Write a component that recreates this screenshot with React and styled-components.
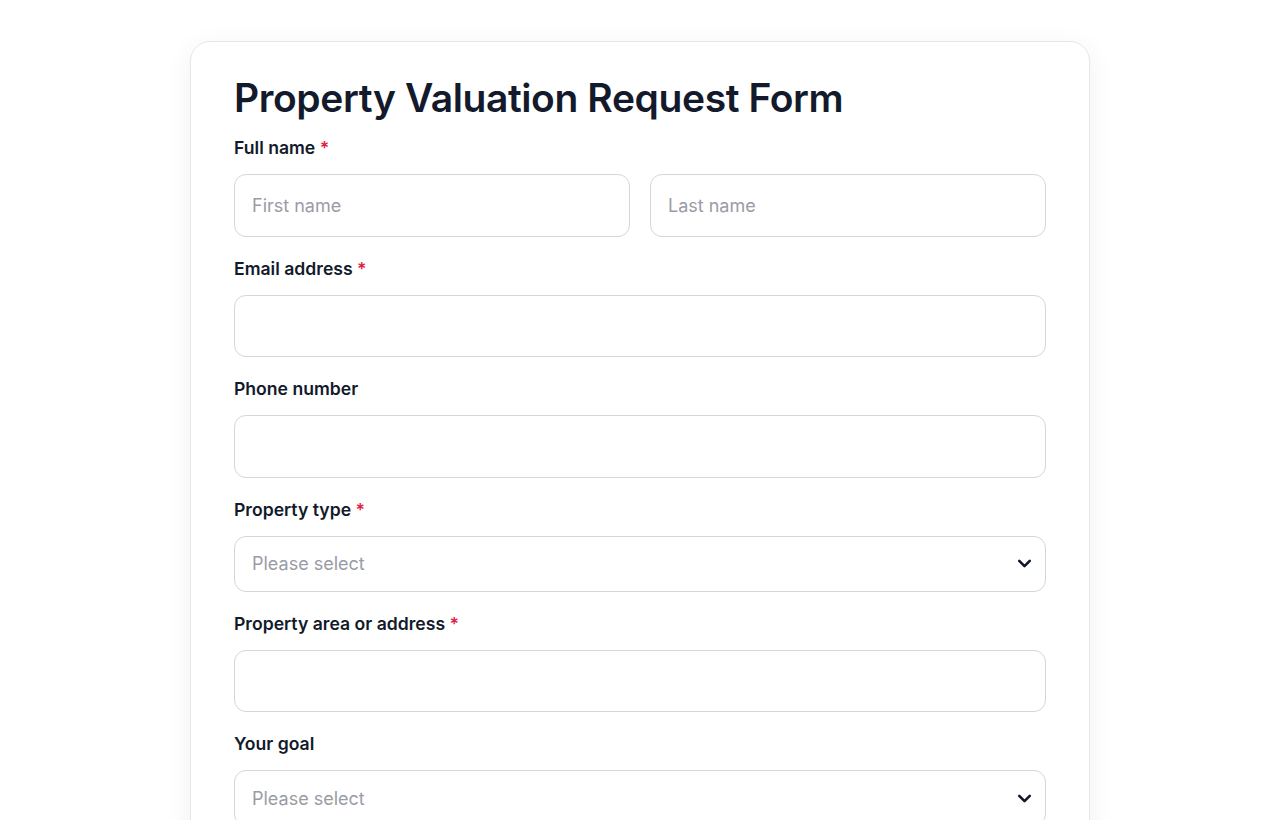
import React from 'react';
import styled, { createGlobalStyle } from 'styled-components';
import { ChevronDown } from 'lucide-react';

const GlobalStyle = createGlobalStyle`
  * { box-sizing: border-box; }
  body {
    margin: 0;
    background: #ffffff;
    font-family: Inter, "Noto Sans", "Liberation Sans", sans-serif;
    color: #111827;
  }
`;

const fields = [
  { label: 'Email address', required: true, type: 'input' },
  { label: 'Phone number', required: false, type: 'input' },
  { label: 'Property type', required: true, type: 'select' },
  { label: 'Property area or address', required: true, type: 'input' },
  { label: 'Your goal', required: false, type: 'select' },
  { label: 'Additional details', required: false, type: 'input' },
];

const App = () => {
  return (
    <React.Fragment>
      <GlobalStyle />
      <Page>
        <Card>
          <Title>Property Valuation Request Form</Title>
          <Fields>
            <Field>
              <Label>
                Full name <Star>*</Star>
              </Label>
              <Row>
                <Input placeholder="First name" />
                <Input placeholder="Last name" />
              </Row>
            </Field>
            {fields.map((f) => (
              <Field key={f.label}>
                <Label>
                  {f.label} {f.required && <Star>*</Star>}
                </Label>
                {f.type === 'select' ? (
                  <SelectBox>
                    <Placeholder>Please select</Placeholder>
                    <ChevronDown size={21} strokeWidth={3} color="#111827" />
                  </SelectBox>
                ) : (
                  <Input />
                )}
              </Field>
            ))}
          </Fields>
        </Card>
      </Page>
    </React.Fragment>
  );
};

const Page = styled.div`
  display: flex;
  justify-content: center;
  padding: 41px 0 60px;
`;

const Card = styled.div`
  width: 900px;
  background: #ffffff;
  border: 1px solid #e6e7eb;
  border-radius: 20px;
  box-shadow: 0 6px 28px rgba(17, 24, 39, 0.06);
  padding: 32px 43px 48px;
`;

const Title = styled.h1`
  margin: 0 0 14px;
  font-size: 39px;
  line-height: 48px;
  font-weight: 600;
  letter-spacing: -0.4px;
  color: #131a2b;
`;

const Fields = styled.div`
  display: flex;
  flex-direction: column;
  gap: 20px;
`;

const Field = styled.div`
  display: flex;
  flex-direction: column;
  gap: 14px;
`;

const Label = styled.label`
  font-size: 17.6px;
  line-height: 24px;
  font-weight: 600;
  color: #131a2b;
`;

const Star = styled.span`
  color: #e11d48;
`;

const Row = styled.div`
  display: grid;
  grid-template-columns: 1fr 1fr;
  gap: 20px;
`;

const Input = styled.input`
  width: 100%;
  height: 62.5px;
  border: 1px solid #d4d6dd;
  border-radius: 12px;
  padding: 0 17px;
  font-family: inherit;
  font-size: 18px;
  color: #111827;
  background: #ffffff;
  outline: none;
  &::placeholder {
    color: #9a9ca5;
  }
`;

const SelectBox = styled.div`
  height: 56px;
  border: 1px solid #d4d6dd;
  border-radius: 12px;
  padding: 0 10px 0 17px;
  display: flex;
  align-items: center;
  justify-content: space-between;
  background: #ffffff;
`;

const Placeholder = styled.span`
  font-size: 18px;
  color: #9a9ca5;
`;

export default App;
